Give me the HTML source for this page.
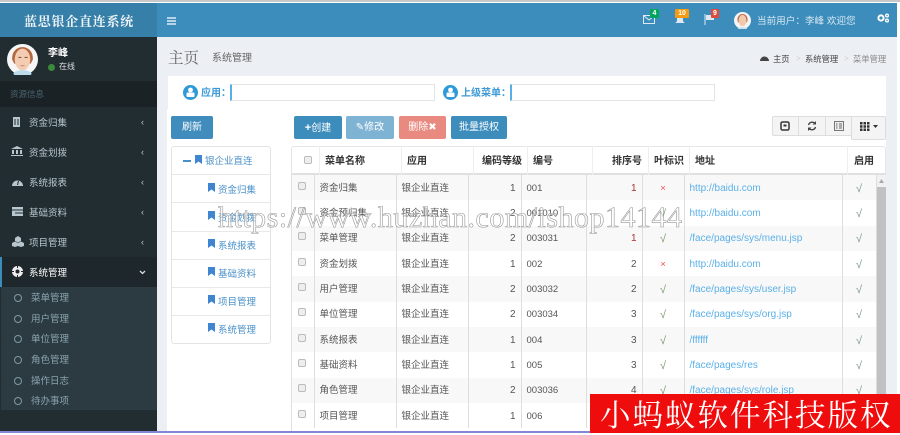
<!DOCTYPE html>
<html lang="zh"><head><meta charset="utf-8"><title>蓝思银企直连系统</title>
<style>
*{box-sizing:border-box}
html,body{margin:0;padding:0}
body{width:900px;height:433px;overflow:hidden;position:relative;background:#fff;font-family:"Liberation Sans","Noto Sans CJK SC",sans-serif;font-size:10px;color:#333}
.a{position:absolute;white-space:nowrap}
svg{position:absolute;display:block}
.m{left:29px;font-size:9.5px;line-height:14px;color:#b8c7ce}
.s{left:31px;font-size:9.5px;line-height:14px;color:#8aa4af}
.c{left:14px;width:8px;height:8px;border:1.7px solid #7f9aa6;border-radius:50%}
.ch{left:141px;font-size:9px;color:#b8c7ce;line-height:12px}
.b{top:116px;height:23px;border-radius:2px;color:#fff;text-align:center;line-height:24px;font-size:10px}
.tr{left:172px;width:98px;border-top:1px solid #e8e8e8;height:28px}
.tt{font-size:9.5px;color:#4a90c8;line-height:14px}
.th{top:146px;height:29px;line-height:31px;font-size:10px;font-weight:bold;color:#333;border-right:1px solid #eee}
table{position:absolute;left:291px;top:175px;width:585px;border-collapse:collapse;table-layout:fixed;font-size:9.5px;color:#555}
td{height:25.35px;padding:2px 5px 0;border-right:1px solid #ddd;white-space:nowrap;overflow:hidden;line-height:14px}
tr:nth-child(odd) td{background:#f8f8f8}
.n{text-align:right;padding-right:5px;font-size:10px}
.cb{display:block;width:8px;height:8px;border:1px solid #bbb;border-radius:2px;background:#eee;margin:-6px 0 0 2px}
.u{color:#5bb0e8;font-size:10px}
.y{text-align:center;color:#7a9a6a;font-size:11px}
.x{text-align:center;color:#e8555a}
.g{text-align:center;color:#7a9a8a;font-size:11px}
</style></head><body>
<div class="a" style="left:0;top:0;width:900px;height:2px;background:#c8c8c8"></div>
<div class="a" style="left:0;top:3px;width:157px;height:34px;background:#367fa9"></div>
<div class="a" style="left:157px;top:3px;width:740px;height:34px;background:#3c8dbc"></div>
<div class="a" style="left:24px;top:12px;font-family:'Noto Serif CJK SC',serif;font-weight:bold;font-size:13px;letter-spacing:.75px;color:#f0f5f8;line-height:18px">蓝思银企直连系统</div>
<svg style="left:167px;top:17px" width="9" height="8"><path d="M0 1h9M0 4h9M0 7h9" stroke="#fff" stroke-width="1.3"/></svg>

<svg style="left:643px;top:15px" width="12" height="9"><rect x=".5" y=".5" width="11" height="8" fill="none" stroke="#dce9f2"/><path d="M1 1l5 4 5-4" fill="none" stroke="#dce9f2"/></svg>
<div class="a" style="left:650px;top:9px;width:9px;height:9px;background:#00a65a;color:#fff;font-size:7px;font-weight:bold;text-align:center;line-height:9px;border-radius:1px">4</div>
<svg style="left:674px;top:15px" width="12" height="10"><path d="M1 8c2-1 2-2 2-4a3 3 0 0 1 6 0c0 2 0 3 2 4z" fill="#dce9f2"/></svg>
<div class="a" style="left:675px;top:9px;width:14px;height:9px;background:#f39c12;color:#fff;font-size:7px;font-weight:bold;text-align:center;line-height:9px;border-radius:1px">10</div>
<svg style="left:704px;top:14px" width="11" height="11"><path d="M1 0v11" stroke="#dce9f2"/><path d="M2 1h8v5H2z" fill="#dce9f2"/></svg>
<div class="a" style="left:711px;top:9px;width:8px;height:9px;background:#dd4b39;color:#fff;font-size:7px;font-weight:bold;text-align:center;line-height:9px;border-radius:1px">9</div>
<svg style="left:734px;top:12px" width="17" height="17" viewBox="0 0 30 30"><circle cx="15" cy="15" r="15" fill="#f4f4f4"/><path d="M6 14C6 0 24 0 24 14l-1 4H7z" fill="#b5683f"/><ellipse cx="15" cy="15" rx="7" ry="10" fill="#f2c9ae"/><path d="M7 30c1-5 15-5 16 0z" fill="#cfe3ee"/></svg>
<div class="a" style="left:757px;top:14px;font-size:9.6px;line-height:15px;color:#d8e8f2">当前用户：李峰 欢迎您</div>
<svg style="left:877px;top:13px" width="12" height="10"><circle cx="4" cy="5" r="2.6" fill="none" stroke="#fff" stroke-width="2"/><circle cx="10" cy="2.5" r="1.4" fill="none" stroke="#fff" stroke-width="1.3"/><circle cx="10" cy="7.5" r="1.4" fill="none" stroke="#fff" stroke-width="1.3"/></svg>

<!-- sidebar -->
<div class="a" style="left:0;top:37px;width:157px;height:394px;background:#222d32"></div>
<svg style="left:7px;top:44px" width="31" height="31" viewBox="0 0 30 30"><circle cx="15" cy="15" r="15" fill="#f6f6f6"/><path d="M5 15C4 -1 26 -1 25 15l-2 4H7z" fill="#b5683f"/><ellipse cx="15" cy="15" rx="7.500" ry="10.500" fill="#f3ccb2"/><path d="M11 13h3M17 13h3" stroke="#8a5a40"/><path d="M13 21h4" stroke="#c98a7a"/><path d="M6 29c2-5 16-5 18 0a15 15 0 0 1-18 0z" fill="#bcdcec"/></svg>
<div class="a" style="left:48px;top:47px;font-size:10px;font-weight:bold;color:#fff;line-height:14px">李峰</div>
<div class="a" style="left:48px;top:64px;width:7px;height:7px;border-radius:50%;background:#3c8a3c"></div>
<div class="a" style="left:59px;top:60px;font-size:8px;color:#ddd;line-height:14px">在线</div>
<div class="a" style="left:0;top:81px;width:157px;height:26px;background:#1a2226"></div>
<div class="a" style="left:10px;top:87px;font-size:8.5px;color:#4b646f;line-height:14px">资源信息</div>

<svg style="left:12px;top:117px" width="9" height="10"><rect x="1" width="7" height="10" fill="#b8c7ce"/><path d="M3 2v6M6 2v6" stroke="#222d32"/></svg>
<div class="a m" style="top:117px">资金归集</div><div class="a ch" style="top:116px">‹</div>
<svg style="left:11px;top:146px" width="12" height="10"><path d="M6 0l6 3H0zM1 4h2v4H1zM5 4h2v4H5zM9 4h2v4H9zM0 9h12v1H0z" fill="#b8c7ce"/></svg>
<div class="a m" style="top:147px">资金划拨</div><div class="a ch" style="top:146px">‹</div>
<svg style="left:12px;top:177px" width="11" height="9"><path d="M0 9a5.500 5.500 0 1 1 11 0z" fill="#b8c7ce"/><path d="M5.500 8l1-4" stroke="#222d32"/></svg>
<div class="a m" style="top:177px">系统报表</div><div class="a ch" style="top:176px">‹</div>
<svg style="left:12px;top:207px" width="11" height="9"><rect width="11" height="9" fill="#b8c7ce"/><path d="M0 3h11M3 6h8" stroke="#222d32"/></svg>
<div class="a m" style="top:207px">基础资料</div><div class="a ch" style="top:206px">‹</div>
<svg style="left:12px;top:236px" width="12" height="11"><path d="M6 0l3 2v3L6 6.500 3 5V2zM3 5.500l3 1.500v3l-3 1-3-1V7zM9 5.500L12 7v3l-3 1-3-1V7z" fill="#b8c7ce"/></svg>
<div class="a m" style="top:237px">项目管理</div><div class="a ch" style="top:236px">‹</div>

<div class="a" style="left:0;top:257px;width:157px;height:30px;background:#1e282c;border-left:2px solid #3c8dbc"></div>
<svg style="left:12px;top:266px" width="11" height="11"><circle cx="5.500" cy="5.500" r="5.500" fill="#eee"/><circle cx="5.500" cy="5.500" r="2" fill="#1e282c"/><path d="M5.500 0v2M5.500 9v2M0 5.500h2M9 5.500h2" stroke="#1e282c"/></svg>
<div class="a m" style="top:267px;color:#fff">系统管理</div>
<svg style="left:139px;top:270px" width="7" height="5"><path d="M1 1l2.500 2.500L6 1" fill="none" stroke="#ddd" stroke-width="1.300"/></svg>

<div class="a" style="left:1px;top:287px;width:156px;height:123px;background:#2c3b41"></div>
<div class="a c" style="top:294px"></div><div class="a s" style="top:292px">菜单管理</div>
<div class="a c" style="top:315px"></div><div class="a s" style="top:313px">用户管理</div>
<div class="a c" style="top:335px"></div><div class="a s" style="top:333px">单位管理</div>
<div class="a c" style="top:356px"></div><div class="a s" style="top:354px">角色管理</div>
<div class="a c" style="top:377px"></div><div class="a s" style="top:375px">操作日志</div>
<div class="a c" style="top:397px"></div><div class="a s" style="top:395px">待办事项</div>

<!-- content -->
<div class="a" style="left:157px;top:37px;width:740px;height:394px;background:#ecf0f5"></div>
<div class="a" style="left:168px;top:47px;font-size:15.500px;color:#666;line-height:20px;font-family:'Noto Serif CJK SC',serif">主页</div>
<div class="a" style="left:212px;top:52px;font-size:10px;color:#666;line-height:14px">系统管理</div>
<svg style="left:760px;top:54px" width="9" height="7"><path d="M0 7a4.500 4.500 0 1 1 9 0z" fill="#444"/></svg>
<div class="a" style="left:773px;top:52px;font-size:8.300px;color:#444;line-height:14px">主页</div>
<div class="a" style="left:796px;top:52px;font-size:8px;color:#ccc;line-height:14px">&gt;</div>
<div class="a" style="left:805px;top:52px;font-size:8.300px;color:#444;line-height:14px">系统管理</div>
<div class="a" style="left:844px;top:52px;font-size:8px;color:#ccc;line-height:14px">&gt;</div>
<div class="a" style="left:853px;top:52px;font-size:8.300px;color:#888;line-height:14px">菜单管理</div>

<div class="a" style="left:168px;top:76px;width:718px;height:33px;background:#fff"></div>
<svg style="left:183px;top:85px" width="15" height="15"><circle cx="7.500" cy="7.500" r="7.500" fill="#2e9ad8"/><circle cx="7.500" cy="5" r="2.400" fill="#fff"/><rect x="3.500" y="7.500" width="8" height="4.500" rx="1" fill="#fff"/></svg>
<div class="a" style="left:201px;top:87px;font-size:10px;font-weight:bold;color:#3d9ad6;line-height:14px">应用：</div>
<div class="a" style="left:230px;top:84px;width:205px;height:17px;background:#fff;border:1px solid #e4e4e4;border-left:2px solid #5aaee6"></div>
<svg style="left:443px;top:85px" width="15" height="15"><circle cx="7.500" cy="7.500" r="7.500" fill="#2e9ad8"/><circle cx="7.500" cy="5" r="2.400" fill="#fff"/><rect x="3.500" y="7.500" width="8" height="4.500" rx="1" fill="#fff"/></svg>
<div class="a" style="left:461px;top:87px;font-size:10px;font-weight:bold;color:#3d9ad6;line-height:14px">上级菜单：</div>
<div class="a" style="left:510px;top:84px;width:205px;height:17px;background:#fff;border:1px solid #e4e4e4;border-left:2px solid #5aaee6"></div>

<div class="a" style="left:167px;top:109px;width:719px;height:322px;background:#fff"></div>
<div class="a b" style="left:171px;width:42px;background:#3f8cbd">刷新</div>
<div class="a b" style="left:294px;width:48px;background:#3c8dbc"><b style="font-size:11px">+</b>创建</div>
<div class="a b" style="left:346px;width:48px;background:#7fb3d3">✎修改</div>
<div class="a b" style="left:399px;width:47px;background:#e98a80">删除✖</div>
<div class="a b" style="left:451px;width:56px;background:#3c8dbc">批量授权</div>

<div class="a" style="left:772px;top:116px;width:114px;height:20px;background:#f4f4f4;border:1px solid #ddd;border-radius:2px"></div>
<div class="a" style="left:798px;top:116px;width:1px;height:20px;background:#ddd"></div>
<div class="a" style="left:825px;top:116px;width:1px;height:20px;background:#ddd"></div>
<div class="a" style="left:851px;top:116px;width:35px;height:24px;background:#f4f4f4;border:1px solid #ddd;border-radius:2px"></div>
<svg style="left:780px;top:121px" width="10" height="10"><rect x="1" y="1" width="8" height="8" rx="1.500" fill="none" stroke="#333" stroke-width="1.500"/><rect x="3.500" y="3.500" width="3" height="2" fill="#333"/></svg>
<svg style="left:807px;top:121px" width="10" height="10"><path d="M1.500 4a3.800 3.800 0 0 1 6.500-1.500M8.500 6A3.800 3.800 0 0 1 2 7.500" fill="none" stroke="#444" stroke-width="1.400"/><path d="M9 0v3.500H5.500zM1 10V6.500h3.500z" fill="#444"/></svg>
<svg style="left:834px;top:121px" width="10" height="10"><rect x=".5" y=".5" width="9" height="9" fill="#eee" stroke="#777"/><path d="M2 3h1.500M5 3h3M2 5h1.500M5 5h3M2 7h1.500M5 7h3" stroke="#666"/></svg>
<svg style="left:860px;top:122px" width="18" height="9"><path d="M0 0h2.500v2.500H0zM3.500 0H6v2.500H3.500zM7 0h2.500v2.500H7zM0 3.300h2.500v2.500H0zM3.500 3.300H6v2.500H3.500zM7 3.300h2.500v2.500H7zM0 6.500h2.500V9H0zM3.500 6.500H6V9H3.500zM7 6.500h2.500V9H7zM13 3h5l-2.500 3z" fill="#333"/></svg>

<!-- tree -->
<div class="a" style="left:171px;top:146px;width:100px;height:198px;border:1px solid #e4e4e4;border-radius:3px;background:#fff"></div>
<div class="a tr" style="top:174px"></div><div class="a tr" style="top:202px"></div><div class="a tr" style="top:231px"></div><div class="a tr" style="top:259px"></div><div class="a tr" style="top:287px"></div><div class="a tr" style="top:315px"></div>
<div class="a" style="left:183px;top:160px;width:8px;height:2px;background:#4a90c8"></div>
<svg style="left:195px;top:155px" width="8" height="9"><path d="M0 0h7v9L3.500 6.500 0 9z" fill="#3f85d0"/></svg>
<div class="a tt" style="left:205px;top:155px">银企业直连</div>
<svg style="left:208px;top:183px" width="8" height="9"><path d="M0 0h7v9L3.500 6.500 0 9z" fill="#3f85d0"/></svg><div class="a tt" style="left:218px;top:184px">资金归集</div>
<svg style="left:208px;top:211px" width="8" height="9"><path d="M0 0h7v9L3.500 6.500 0 9z" fill="#3f85d0"/></svg><div class="a tt" style="left:218px;top:212px">资金划拨</div>
<svg style="left:208px;top:239px" width="8" height="9"><path d="M0 0h7v9L3.500 6.500 0 9z" fill="#3f85d0"/></svg><div class="a tt" style="left:218px;top:240px">系统报表</div>
<svg style="left:208px;top:267px" width="8" height="9"><path d="M0 0h7v9L3.500 6.500 0 9z" fill="#3f85d0"/></svg><div class="a tt" style="left:218px;top:268px">基础资料</div>
<svg style="left:208px;top:295px" width="8" height="9"><path d="M0 0h7v9L3.500 6.500 0 9z" fill="#3f85d0"/></svg><div class="a tt" style="left:218px;top:296px">项目管理</div>
<svg style="left:208px;top:323px" width="8" height="9"><path d="M0 0h7v9L3.500 6.500 0 9z" fill="#3f85d0"/></svg><div class="a tt" style="left:218px;top:324px">系统管理</div>

<!-- table head -->
<div class="a" style="left:291px;top:146px;width:595px;height:29px;border:1px solid #e6e6e6;border-bottom:2px solid #e0e0e0;border-radius:3px 3px 0 0"></div>
<div class="a" style="left:304px;top:156px;width:8px;height:8px;border:1px solid #bbb;border-radius:2px;background:#eee"></div>
<div class="a th" style="left:291px;width:29px"></div>
<div class="a th" style="left:320px;width:82px;padding-left:5px">菜单名称</div>
<div class="a th" style="left:402px;width:72px;padding-left:5px">应用</div>
<div class="a th" style="left:474px;width:54px;padding-left:8px;white-space:nowrap">编码等级</div>
<div class="a th" style="left:528px;width:65px;padding-left:5px">编号</div>
<div class="a th" style="left:593px;width:56px;text-align:right;padding-right:6px">排序号</div>
<div class="a th" style="left:649px;width:41px;text-align:center;white-space:nowrap">叶标识</div>
<div class="a th" style="left:690px;width:158px;padding-left:5px">地址</div>
<div class="a th" style="left:848px;width:38px;padding-left:6px;border-right:0">启用</div>

<table>
<colgroup><col style="width:23px"><col style="width:82px"><col style="width:72px"><col style="width:53px"><col style="width:65px"><col style="width:56px"><col style="width:42px"><col style="width:158px"><col style="width:34px"></colgroup>
<tr><td><i class="cb"></i></td><td>资金归集</td><td>银企业直连</td><td class="n">1</td><td>001</td><td class="n" style="color:#a33">1</td><td class="x">×</td><td class="u">http://baidu.com</td><td class="g">√</td></tr>
<tr><td><i class="cb"></i></td><td>资金预归集</td><td>银企业直连</td><td class="n">2</td><td>001010</td><td class="n"></td><td class="y">√</td><td class="u">http://baidu.com</td><td class="g">√</td></tr>
<tr><td><i class="cb"></i></td><td>菜单管理</td><td>银企业直连</td><td class="n">2</td><td>003031</td><td class="n" style="color:#a33">1</td><td class="y">√</td><td class="u">/face/pages/sys/menu.jsp</td><td class="g">√</td></tr>
<tr><td><i class="cb"></i></td><td>资金划拨</td><td>银企业直连</td><td class="n">1</td><td>002</td><td class="n">2</td><td class="x">×</td><td class="u">http://baidu.com</td><td class="g">√</td></tr>
<tr><td><i class="cb"></i></td><td>用户管理</td><td>银企业直连</td><td class="n">2</td><td>003032</td><td class="n">2</td><td class="y">√</td><td class="u">/face/pages/sys/user.jsp</td><td class="g">√</td></tr>
<tr><td><i class="cb"></i></td><td>单位管理</td><td>银企业直连</td><td class="n">2</td><td>003034</td><td class="n">3</td><td class="y">√</td><td class="u">/face/pages/sys/org.jsp</td><td class="g">√</td></tr>
<tr><td><i class="cb"></i></td><td>系统报表</td><td>银企业直连</td><td class="n">1</td><td>004</td><td class="n">3</td><td class="y">√</td><td class="u">/ffffff</td><td class="g">√</td></tr>
<tr><td><i class="cb"></i></td><td>基础资料</td><td>银企业直连</td><td class="n">1</td><td>005</td><td class="n">3</td><td class="y">√</td><td class="u">/face/pages/res</td><td class="g">√</td></tr>
<tr><td><i class="cb"></i></td><td>角色管理</td><td>银企业直连</td><td class="n">2</td><td>003036</td><td class="n">4</td><td class="y">√</td><td class="u">/face/pages/sys/role.jsp</td><td class="g">√</td></tr>
<tr><td><i class="cb"></i></td><td>项目管理</td><td>银企业直连</td><td class="n">1</td><td>006</td><td class="n"></td><td class="y"></td><td class="u"></td><td class="g"></td></tr>
</table>
<div class="a" style="left:291px;top:175px;width:1px;height:256px;background:#e0e0e0"></div>

<div class="a" style="left:877px;top:175px;width:9px;height:256px;background:#f1f1f1"></div>
<div class="a" style="left:877px;top:187px;width:9px;height:244px;background:#c1c1c1"></div>
<svg style="left:879px;top:179px" width="5" height="4"><path d="M2.500 0L5 4H0z" fill="#aaa"/></svg>

<div class="a" style="left:218px;top:201px;font-family:'Liberation Serif',serif;font-size:30px;line-height:34px;letter-spacing:.5px;color:rgba(255,255,255,.55);-webkit-text-stroke:.6px #999">https://www.huzhan.com/ishop14144</div>

<div class="a" style="left:0;top:431px;width:590px;height:2px;background:#8585d5"></div>
<div class="a" style="left:590px;top:394px;width:310px;height:39px;background:#ee0c0c"></div>
<div class="a" style="left:600px;top:394px;width:300px;font-family:'Noto Serif CJK SC',serif;font-size:30.500px;letter-spacing:2px;line-height:39px;color:#fff">小蚂蚁软件科技版权</div>
</body></html>
